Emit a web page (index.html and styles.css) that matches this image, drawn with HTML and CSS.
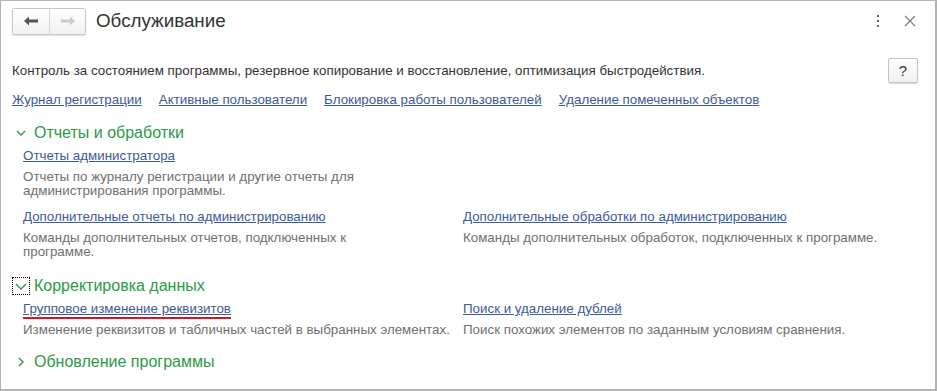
FILE: index.html
```html
<!DOCTYPE html>
<html lang="ru">
<head>
    <meta charset="UTF-8">
    <title>Обслуживание</title>
    <link rel="stylesheet" href="styles.css">
</head>
<body>
    <div class="window">
        <div class="titlebar">
            <div class="nav">
                <button class="nav-btn">
                    <svg width="14" height="10" viewBox="0 0 14 10"><path d="M0 5 L5 0.5 L5 3.5 L14 3.5 L14 6.5 L5 6.5 L5 9.5 Z" fill="#555"/></svg>
                </button>
                <button class="nav-btn">
                    <svg width="14" height="10" viewBox="0 0 14 10"><path d="M14 5 L9 0.5 L9 3.5 L0 3.5 L0 6.5 L9 6.5 L9 9.5 Z" fill="#ccc"/></svg>
                </button>
            </div>
            <div class="title">Обслуживание</div>
            <div class="win-icons">
                <svg width="4" height="14" viewBox="0 0 4 14"><rect x="1" y="1" width="2" height="2" fill="#666"/><rect x="1" y="6" width="2" height="2" fill="#666"/><rect x="1" y="11" width="2" height="2" fill="#666"/></svg>
                <svg width="12" height="12" viewBox="0 0 12 12"><path d="M1 1 L11 11 M11 1 L1 11" stroke="#777" stroke-width="1.1"/></svg>
            </div>
        </div>

        <div class="content">
            <div class="intro">
                <span>Контроль за состоянием программы, резервное копирование и восстановление, оптимизация быстродействия.</span>
                <button class="help">?</button>
            </div>

            <div class="toplinks">
                <a href="#">Журнал регистрации</a>
                <a href="#">Активные пользователи</a>
                <a href="#">Блокировка работы пользователей</a>
                <a href="#">Удаление помеченных объектов</a>
            </div>

            <div class="group">
                <div class="group-head">
                    <span class="chev"><svg width="10" height="6" viewBox="0 0 10 6"><path d="M1 1 L5 5 L9 1" stroke="#2c9a47" stroke-width="1.4" fill="none"/></svg></span>
                    Отчеты и обработки
                </div>
                <div class="items">
                    <div class="item">
                        <a href="#">Отчеты администратора</a>
                        <p class="narrow">Отчеты по журналу регистрации и другие отчеты для администрирования программы.</p>
                    </div>
                    <div class="item"></div>
                    <div class="item">
                        <a href="#">Дополнительные отчеты по администрированию</a>
                        <p class="narrow">Команды дополнительных отчетов, подключенных к программе.</p>
                    </div>
                    <div class="item">
                        <a href="#">Дополнительные обработки по администрированию</a>
                        <p>Команды дополнительных обработок, подключенных к программе.</p>
                    </div>
                </div>
            </div>

            <div class="group">
                <div class="group-head">
                    <span class="chev focused"><svg width="12" height="7" viewBox="0 0 12 7"><path d="M1 1 L6 6 L11 1" stroke="#2c9a47" stroke-width="1.4" fill="none"/></svg></span>
                    Корректировка данных
                </div>
                <div class="items last">
                    <div class="item">
                        <a href="#" class="marked">Групповое изменение реквизитов</a>
                        <p>Изменение реквизитов и табличных частей в выбранных элементах.</p>
                    </div>
                    <div class="item">
                        <a href="#">Поиск и удаление дублей</a>
                        <p>Поиск похожих элементов по заданным условиям сравнения.</p>
                    </div>
                </div>
            </div>

            <div class="group">
                <div class="group-head">
                    <span class="chev"><svg width="6" height="10" viewBox="0 0 6 10"><path d="M1 1 L5 5 L1 9" stroke="#2c9a47" stroke-width="1.4" fill="none"/></svg></span>
                    Обновление программы
                </div>
            </div>
        </div>
    </div>
</body>
</html>
```

FILE: styles.css
```css
body {
    margin: 0;
    font-family: Arial, "Liberation Sans", sans-serif;
    font-size: 13.35px;
    color: #333;
    background: #fff;
}
.window {
    width: 934px;
    height: 388px;
    border: 1px solid #b4b4b4;
    border-right-width: 2px;
    border-bottom-width: 2px;
    overflow: hidden;
}
.titlebar {
    display: flex;
    align-items: center;
    height: 40px;
    padding: 0 11px;
}
.nav {
    display: flex;
    border: 1px solid #c8c8c8;
    border-radius: 2px;
    box-shadow: 0 1px 1px rgba(0,0,0,0.12);
}
.nav-btn {
    width: 36px;
    height: 25px;
    border: none;
    background: linear-gradient(#fff, #f2f2f2);
    display: flex;
    align-items: center;
    justify-content: center;
    padding: 0;
}
.nav-btn + .nav-btn {
    border-left: 1px solid #d6d6d6;
}
.title {
    margin-left: 10px;
    font-size: 18.8px;
    color: #333;
    flex: 1;
}
.win-icons {
    display: flex;
    align-items: center;
    gap: 24px;
    margin-right: 8px;
}
.content {
    padding: 0 11px;
}
.intro {
    display: flex;
    align-items: center;
    justify-content: space-between;
    height: 30px;
    margin-top: 14px;
}
.help {
    width: 30px;
    height: 25px;
    border: 1px solid #c4c4c4;
    border-radius: 2px;
    background: linear-gradient(#fff, #f0f0f0);
    box-shadow: 0 1px 1px rgba(0,0,0,0.15);
    font-family: Arial, "Liberation Sans", sans-serif;
    font-size: 15px;
    color: #333;
    margin-right: 6px;
}
.toplinks {
    display: flex;
    gap: 17px;
    margin-top: 6px;
    line-height: 18px;
}
a {
    color: #3d5a9a;
    text-decoration: underline;
}
.group {
    margin-top: 5px;
}
.toplinks + .group {
    margin-top: 12px;
}
.group-head {
    display: flex;
    align-items: center;
    font-size: 16px;
    color: #2c9a47;
    height: 24px;
}
.chev {
    width: 18px;
    height: 18px;
    display: flex;
    align-items: center;
    justify-content: center;
    margin-right: 4px;
}
.chev.focused {
    outline: 1px dotted #000;
    outline-offset: -1px;
}
.items {
    display: grid;
    grid-template-columns: 440px 1fr;
    padding-left: 11px;
    margin-top: 2px;
    line-height: 18px;
}
.item p {
    margin: 5px 0 10px;
    color: #707070;
    line-height: 14px;
}
.items.last .item p {
    margin-bottom: 8px;
}
.item p.narrow {
    width: 345px;
}
.marked {
    border-bottom: 2px solid #d8141c;
    padding-bottom: 1px;
}
```
